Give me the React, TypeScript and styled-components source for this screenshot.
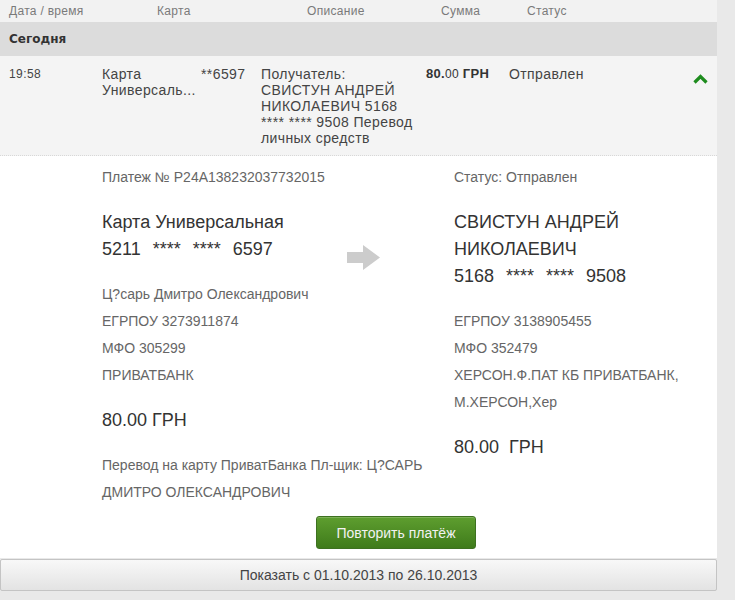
import React from "react";
import styled, { createGlobalStyle } from "styled-components";

const Global = createGlobalStyle`
  html, body { margin: 0; padding: 0; }
  body {
    background: #e9e9e9;
    font-family: "Liberation Sans", Arial, sans-serif;
    color: #333;
  }
`;

const Page = styled.div`
  width: 735px;
  height: 600px;
  overflow: hidden;
  background: #e9e9e9;
`;

const Main = styled.div`
  width: 717px;
  display: flex;
  flex-direction: column;
`;

const HeaderRow = styled.div`
  display: grid;
  grid-template-columns: 148px 150px 134px 86px 1fr;
  height: 22px;
  align-items: center;
  padding-left: 9px;
  background: #f2f2f2;
  font-size: 12px;
  letter-spacing: 0.3px;
  color: #7a7a7a;
`;

const DayBar = styled.div`
  height: 34px;
  display: flex;
  align-items: center;
  padding-left: 9px;
  background: #dcdcdc;
  font-family: "DejaVu Sans", Verdana, sans-serif;
  font-weight: bold;
  font-size: 12px;
  color: #333;
`;

const TxRow = styled.div`
  display: grid;
  grid-template-columns: 93px 99px 60px 165px 83px 1fr 24px;
  padding: 10px 0 9px 9px;
  background: #f4f4f4;
  border-bottom: 1px dotted #d8d8d8;
  font-size: 14px;
  line-height: 16px;
  letter-spacing: 0.4px;
  color: #444;
`;

const Cell = styled.div<{ $small?: boolean; $pad?: number }>`
  font-size: ${(p) => (p.$small ? "12px" : "14px")};
  padding-right: ${(p) => p.$pad ?? 4}px;
`;

const Amount = styled.div`
  font-weight: bold;
  font-size: 13px;
  color: #333;
  letter-spacing: 0.3px;
  & small {
    font-weight: normal;
    font-size: 12px;
  }
`;

const Chevron = styled.div`
  padding-top: 5px;
`;

const Details = styled.div`
  background: #fff;
  padding: 8px 0 9px 0;
  display: flex;
  flex-direction: column;
`;

const Columns = styled.div`
  display: grid;
  grid-template-columns: 352px 250px;
  padding-left: 102px;
`;

const Col = styled.div`
  display: flex;
  flex-direction: column;
  gap: 18px;
`;

const Block = styled.div`
  display: flex;
  flex-direction: column;
`;

const Small = styled.div`
  font-size: 14px;
  line-height: 27px;
  color: #666;
`;

const Big = styled.div`
  font-size: 18px;
  line-height: 27px;
  color: #333;
`;

const CardNumber = styled(Big)`
  word-spacing: 7px;
`;

const CardRow = styled.div`
  display: flex;
  align-items: flex-start;
  height: 54px;
`;

const CardInfo = styled.div`
  width: 245px;
  display: flex;
  flex-direction: column;
`;

const Arrow = styled.svg`
  flex: none;
  margin-top: 36px;
`;

const Note = styled.div`
  font-size: 14px;
  line-height: 27px;
  color: #666;
  max-width: 330px;
`;

const ButtonRow = styled.div`
  padding: 10px 0 0 316px;
`;

const RepeatButton = styled.button`
  width: 160px;
  height: 33px;
  border: 1px solid #3d7120;
  border-radius: 3px;
  background: linear-gradient(#5e9e2f, #3f7b1b);
  color: #f2f2f2;
  font-family: "Liberation Sans", Arial, sans-serif;
  font-size: 14px;
  cursor: pointer;
  box-shadow: inset 0 1px 0 rgba(255, 255, 255, 0.2);
`;

const ShowBar = styled.div`
  margin-top: 1px;
  width: 715px;
  height: 30px;
  border: 1px solid #c4c4c4;
  border-radius: 2px;
  background: linear-gradient(#f8f8f8, #e3e3e3);
  display: flex;
  align-items: center;
  justify-content: center;
  font-size: 14px;
  color: #444;
`;

export default function App() {
  return (
    <Page>
      <Global />
      <Main>
        <HeaderRow>
          <span>Дата / время</span>
          <span>Карта</span>
          <span>Описание</span>
          <span>Сумма</span>
          <span>Статус</span>
        </HeaderRow>
        <DayBar>Сегодня</DayBar>
        <TxRow>
          <Cell $small>19:58</Cell>
          <Cell>Карта Универсаль...</Cell>
          <Cell>**6597</Cell>
          <Cell $pad={10}>
            Получатель:
            <br />
            СВИСТУН АНДРЕЙ НИКОЛАЕВИЧ 5168 **** **** 9508 Перевод личных
            средств
          </Cell>
          <Amount>
            80.<small>00</small> ГРН
          </Amount>
          <Cell>Отправлен</Cell>
          <Chevron>
            <svg width="15" height="10" viewBox="0 0 15 10">
              <polyline
                points="1.5,8.5 7.5,2.5 13.5,8.5"
                fill="none"
                stroke="#1e8c1e"
                strokeWidth="3.2"
              />
            </svg>
          </Chevron>
        </TxRow>
        <Details>
          <Columns>
            <Col>
              <Small>Платеж № P24A138232037732015</Small>
              <CardRow>
                <CardInfo>
                  <Big>Карта Универсальная</Big>
                  <CardNumber>5211 **** **** 6597</CardNumber>
                </CardInfo>
                <Arrow width="34" height="26" viewBox="0 0 34 26">
                  <polygon
                    points="0,7 16,7 16,0 33,12.5 16,25 16,18 0,18"
                    fill="#cccccc"
                  />
                </Arrow>
              </CardRow>
              <Block>
                <Small>Ц?сарь Дмитро Олександрович</Small>
                <Small>ЕГРПОУ 3273911874</Small>
                <Small>МФО 305299</Small>
                <Small>ПРИВАТБАНК</Small>
              </Block>
              <Big>80.00 ГРН</Big>
              <Note>
                Перевод на карту ПриватБанка Пл-щик: Ц?САРЬ ДМИТРО ОЛЕКСАНДРОВИЧ
              </Note>
            </Col>
            <Col>
              <Small>Статус: Отправлен</Small>
              <Block>
                <Big>СВИСТУН АНДРЕЙ</Big>
                <Big>НИКОЛАЕВИЧ</Big>
                <CardNumber>5168 **** **** 9508</CardNumber>
              </Block>
              <Block>
                <Small>ЕГРПОУ 3138905455</Small>
                <Small>МФО 352479</Small>
                <Small>ХЕРСОН.Ф.ПАТ КБ ПРИВАТБАНК, М.ХЕРСОН,Хер</Small>
              </Block>
              <Big>80.00&nbsp; ГРН</Big>
            </Col>
          </Columns>
          <ButtonRow>
            <RepeatButton>Повторить платёж</RepeatButton>
          </ButtonRow>
        </Details>
        <ShowBar>Показать с 01.10.2013 по 26.10.2013</ShowBar>
      </Main>
    </Page>
  );
}
